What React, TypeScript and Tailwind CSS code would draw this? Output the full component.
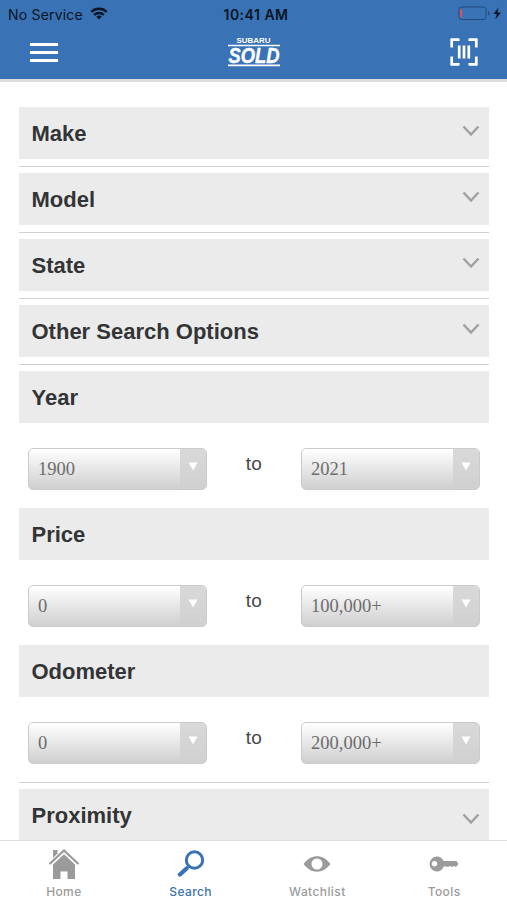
import type { ReactNode } from "react";
import clsx from "clsx";

const FILTERS = ["Make", "Model", "State", "Other Search Options"];

const RANGES = [
  { label: "Year", from: "1900", to: "2021" },
  { label: "Price", from: "0", to: "100,000+" },
  { label: "Odometer", from: "0", to: "200,000+" },
];

function StatusBar() {
  return (
    <div className="grid h-7 grid-cols-3 items-center pl-2 pr-[5px] font-[Inter,sans-serif] text-[14px] text-[#0b1522]">
      <div className="flex items-center gap-[7px]">
        <span className="whitespace-nowrap tracking-[0.2px]">No Service</span>
        <svg className="-mt-0.5" width="18" height="13" viewBox="0 0 18 13" fill="none" stroke="currentColor" strokeWidth="2.4">
          <path d="M1.3 4.9a11 11 0 0 1 15.4 0" />
          <path d="M4.2 8a6.8 6.8 0 0 1 9.6 0" />
          <path d="M9 12.5 6.3 9.8a3.9 3.9 0 0 1 5.4 0Z" fill="currentColor" stroke="none" />
        </svg>
      </div>
      <span className="pl-0.5 text-center font-semibold tracking-[0.5px] whitespace-nowrap">10:41 AM</span>
      <svg className="-mt-0.5 justify-self-end" width="44" height="15" viewBox="0 0 44 15" fill="none">
        <rect x="1" y="1" width="27" height="12.5" rx="2.8" stroke="#254b7c" />
        <path d="M3 3.2v8" stroke="#e0505c" strokeWidth="2" />
        <path d="M30 5v4.5q1.5-.7 1.5-2.25T30 5Z" fill="#254b7c" />
        <path d="M40.5 1.5 35.5 8h3.3l-1.5 5.5L43 6.5h-3.6Z" fill="#0b1522" />
      </svg>
    </div>
  );
}

function Logo() {
  return (
    <svg
      width="54"
      height="32"
      viewBox="0 0 54 32"
      overflow="visible"
      fill="#fff"
      fontFamily="Liberation Sans, sans-serif"
      fontWeight="700"
    >
      <text x="9.5" y="7" fontSize="7" textLength="34" lengthAdjust="spacingAndGlyphs">SUBARU</text>
      <path d="M1 8.7h52v1.6H1zM1 28.6h52v1.6H1z" />
      <text x="1.5" y="26.6" fontSize="21.5" fontStyle="italic" textLength="51" lengthAdjust="spacingAndGlyphs" stroke="#fff" strokeWidth=".4">
        SOLD
      </text>
    </svg>
  );
}

function Header() {
  return (
    <header className="h-[82px] shrink-0 border-b-[3px] border-[#dcdddf] bg-[#3972b5]">
      <StatusBar />
      <div className="flex h-12 items-center justify-between pl-[30px] pr-7">
        <button className="flex w-7 flex-col gap-[5px]" aria-label="Menu">
          <span className="h-[3px] bg-white" />
          <span className="h-[3px] bg-white" />
          <span className="h-[3px] bg-white" />
        </button>
        <Logo />
        <button aria-label="Scan">
          <svg width="30" height="30" viewBox="0 0 30 30" fill="none" stroke="#fff" strokeWidth="2.7">
            <path d="M2.7 10.5V2.7H10.5M19.5 2.7H27.3V10.5M27.3 19.5V27.3H19.5M10.5 27.3H2.7V19.5" />
            <path d="M10.2 8.5v13M15 8.5v13M19.8 8.5v13" />
          </svg>
        </button>
      </div>
    </header>
  );
}

function SectionBar({ label, chevronClass }: { label: string; chevronClass?: string }) {
  return (
    <div className="flex h-[52px] items-start justify-between bg-[#ebebeb] pl-[12.5px] pr-[9px] font-['Liberation_Sans',sans-serif] text-[#333436]">
      <h2 className="pt-3 text-[22px] leading-[29px] font-bold">{label}</h2>
      {chevronClass && (
        <svg className={chevronClass} width="18" height="12" viewBox="0 0 18 12" fill="none" stroke="#a0a0a0" strokeWidth="2.4">
          <path d="m1.5 1.5 7.5 8 7.5-8" />
        </svg>
      )}
    </div>
  );
}

function Divider() {
  return <div className="mt-[7px] mb-1.5 h-px bg-[#d0d0d0]" />;
}

function Select({ value }: { value: string }) {
  return (
    <button className="flex h-[42px] w-[179px] overflow-hidden rounded-[5px] border border-[#cbcbcb] bg-linear-to-b from-white to-[#cfcfcf] text-left">
      <span className="flex-1 pl-[9px] font-['Liberation_Serif',serif] text-[18.5px] leading-[41px] text-[#6c6c6c]">
        {value}
      </span>
      <span className="flex h-full w-[26px] justify-center bg-linear-to-b from-[#d9d9d9] to-[#d0d0d0] pt-[13px]">
        <svg width="10" height="9" viewBox="0 0 10 9" fill="#fff">
          <path d="M.5.5h9L5 8.5Z" />
        </svg>
      </span>
    </button>
  );
}

function RangeRow({ from, to }: { from: string; to: string }) {
  return (
    <div className="flex h-[85px] items-start justify-between px-[9px] pt-[25px]">
      <Select value={from} />
      <span className="pt-1 font-['Liberation_Sans',sans-serif] text-[19px] leading-6 tracking-[0.4px] text-[#484848]">
        to
      </span>
      <Select value={to} />
    </div>
  );
}

function Tab({ label, active, children }: { label: string; active?: boolean; children: ReactNode }) {
  return (
    <button
      className={clsx(
        "flex flex-col items-center pl-px font-[Inter,sans-serif] text-[12px] leading-[18px] font-medium tracking-[0.4px]",
        active ? "text-[#3972b5]" : "text-[#9b9b9b]",
      )}
    >
      <span className="flex h-[42px] items-center pt-[3px]">{children}</span>
      {label}
    </button>
  );
}

function TabBar() {
  return (
    <nav className="grid h-[60px] shrink-0 grid-cols-4 border-t border-[#dedede] bg-white">
      <Tab label="Home">
        <svg width="32" height="32" viewBox="0 0 32 32" fill="currentColor">
          <path d="M5 2h4.5v3.5L5 10Z" />
          <path d="M1.5 16 16 2.5 30.5 16" fill="none" stroke="currentColor" strokeWidth="2.3" />
          <path d="M5 16.5 16 6.3l11 10.2V31h-7.5v-7.5h-7V31H5Z" />
        </svg>
      </Tab>
      <Tab label="Search" active>
        <svg width="28" height="28" viewBox="0 0 28 28" fill="none" stroke="currentColor">
          <circle cx="17.5" cy="10" r="8.2" strokeWidth="3" />
          <path d="m12 16-2 2" strokeWidth="2" />
          <path d="m9.5 18.5-6.500 6" strokeWidth="4.3" strokeLinecap="round" />
        </svg>
      </Tab>
      <Tab label="Watchlist">
        <svg width="28" height="16" viewBox="0 0 28 16" fill="currentColor" fillRule="evenodd">
          <path d="M.5 8C5 2.5 9 .3 14 .3S23 2.5 27.5 8C23 13.5 19 15.7 14 15.7S5 13.5.5 8ZM14 2.5a5.5 5.5 0 1 0 0 11 5.5 5.5 0 0 0 0-11Z" />
        </svg>
      </Tab>
      <Tab label="Tools">
        <svg width="30" height="16" viewBox="0 0 30 16" fill="currentColor" fillRule="evenodd">
          <path d="M8 .5c3 0 5.5 1.8 6.5 4.5h13l2 3L27 11l-2-1-2 1-2-1-2 1-1.5-.5h-3C13.500 14 11 15.5 8 15.5A7.5 7.5 0 0 1 8 .5ZM5.5 5a2.7 2.7 0 1 0 0 5.4 2.7 2.7 0 0 0 0-5.4Z" />
        </svg>
      </Tab>
    </nav>
  );
}

export default function App() {
  return (
    <div className="flex h-[900px] w-[507px] flex-col overflow-hidden bg-white">
      <Header />
      <main className="min-h-0 flex-1 overflow-hidden pt-[25px] pr-[18px] pl-[19px]">
        {FILTERS.map((label) => (
          <div key={label}>
            <SectionBar label={label} chevronClass="mt-[18px]" />
            <Divider />
          </div>
        ))}
        {RANGES.map((r) => (
          <div key={r.label}>
            <SectionBar label={r.label} />
            <RangeRow from={r.from} to={r.to} />
          </div>
        ))}
        <div className="mb-1.5 h-px bg-[#d0d0d0]" />
        <SectionBar label="Proximity" chevronClass="mt-6" />
      </main>
      <TabBar />
    </div>
  );
}
